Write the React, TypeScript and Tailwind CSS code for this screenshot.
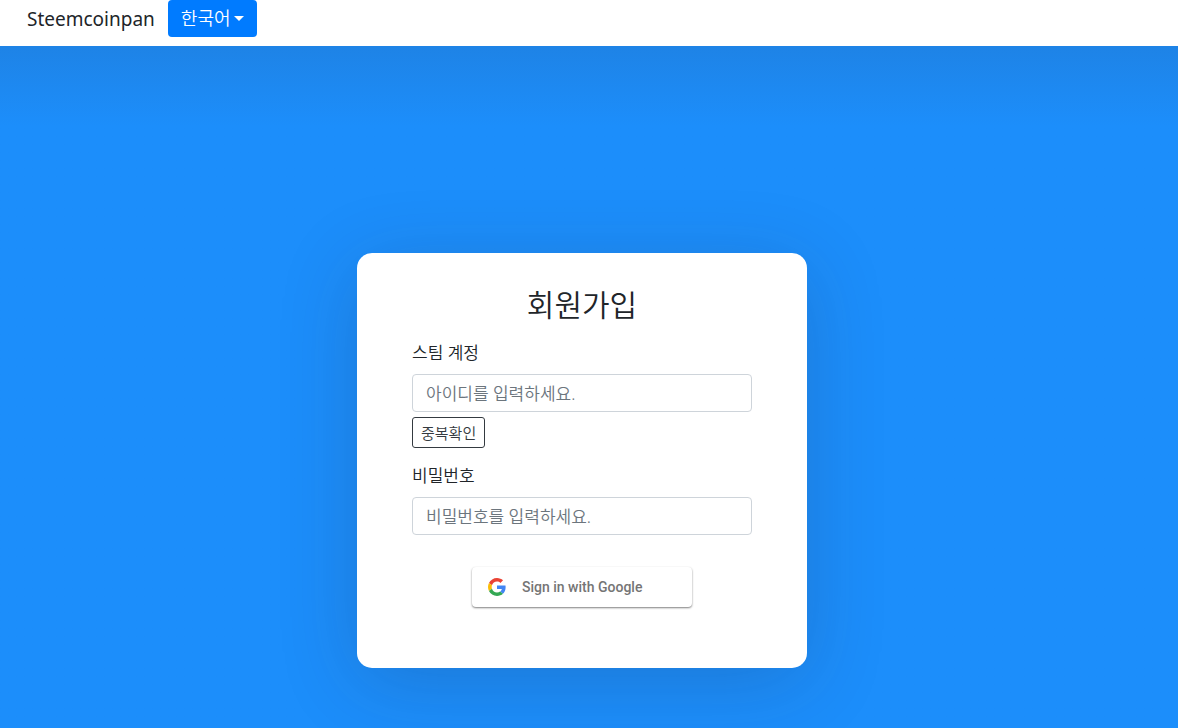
import { useState } from "react"

const GoogleLogo = () => (
  <svg viewBox="0 0 48 48" className="h-[18px] w-[18px]" aria-hidden="true">
    <path
      fill="#EA4335"
      d="M24 9.5c3.54 0 6.71 1.22 9.21 3.6l6.85-6.85C35.9 2.38 30.47 0 24 0 14.62 0 6.51 5.38 2.56 13.22l7.98 6.19C12.43 13.72 17.74 9.5 24 9.5z"
    />
    <path
      fill="#4285F4"
      d="M46.98 24.55c0-1.57-.15-3.09-.38-4.55H24v9.02h12.94c-.58 2.96-2.26 5.48-4.78 7.18l7.73 6c4.51-4.18 7.09-10.36 7.09-17.65z"
    />
    <path
      fill="#FBBC05"
      d="M10.53 28.59c-.48-1.45-.76-2.99-.76-4.59s.27-3.14.76-4.59l-7.98-6.19C.92 16.46 0 20.12 0 24c0 3.88.92 7.54 2.56 10.78l7.97-6.19z"
    />
    <path
      fill="#34A853"
      d="M24 48c6.48 0 11.93-2.13 15.89-5.81l-7.73-6c-2.15 1.45-4.92 2.3-8.16 2.3-6.26 0-11.57-4.22-13.47-9.91l-7.98 6.19C6.51 42.62 14.62 48 24 48z"
    />
  </svg>
)

const Header = () => (
  <header className="flex h-[46px] items-start bg-white pl-[27px]">
    <a href="#" className="mr-[13px] text-[19px] leading-[38px] text-[#212529]">
      Steemcoinpan
    </a>
    <button
      type="button"
      aria-haspopup="menu"
      className="flex h-[37px] items-center rounded bg-[#007bff] px-[13px] text-[18px] font-[350] text-white"
    >
      한국어
      <span className="ml-[3px] border-x-[5px] border-t-[5px] border-x-transparent border-t-white" />
    </button>
  </header>
)

interface FieldProps {
  id: string
  label: string
  type: string
  placeholder: string
  value: string
  onChange: (value: string) => void
}

const Field = ({ id, label, type, placeholder, value, onChange }: FieldProps) => (
  <div>
    <label htmlFor={id} className="mb-[9px] block text-[17px] leading-6">
      {label}
    </label>
    <input
      id={id}
      type={type}
      placeholder={placeholder}
      value={value}
      onChange={(e) => onChange(e.target.value)}
      className="block h-[38px] w-full rounded border border-[#ced4da] bg-white px-[13px] text-[17px] placeholder:text-[#6c757d]"
    />
  </div>
)

export default function App() {
  const [account, setAccount] = useState("")
  const [password, setPassword] = useState("")

  return (
    <div className="flex min-h-screen flex-col bg-[#1c8efb] font-['Noto_Sans','Noto_Sans_CJK_KR',sans-serif] text-[#212529]">
      <Header />

      <main className="flex grow justify-center bg-linear-to-b from-[#1e83e6] to-[#1c8efb] to-[80px] pt-[207px] pr-[14px] pb-[60px]">
        <form
          onSubmit={(e) => e.preventDefault()}
          className="w-[450px] rounded-[15px] bg-white px-[55px] pt-[34px] pb-[61px] font-[350] shadow-[0_14px_80px_rgba(34,35,58,0.2)]"
        >
          <h1 className="mb-[18px] text-center text-[30px] leading-9">회원가입</h1>

          <Field
            id="account"
            label="스팀 계정"
            type="text"
            placeholder="아이디를 입력하세요."
            value={account}
            onChange={setAccount}
          />
          <button
            type="button"
            className="mt-[5px] mb-4 block h-[31px] rounded-[3px] border border-[#343a40] px-2 text-[15px] leading-5 text-[#343a40]"
          >
            중복확인
          </button>

          <Field
            id="password"
            label="비밀번호"
            type="password"
            placeholder="비밀번호를 입력하세요."
            value={password}
            onChange={setPassword}
          />

          {/* Social login */}
          <button
            type="button"
            className="mx-auto mt-8 flex h-10 w-[220px] items-center gap-4 rounded-sm bg-white pl-4 font-['Roboto',sans-serif] text-sm font-medium text-[#757575] shadow-[0_1px_2px_rgba(0,0,0,0.5)]"
          >
            <GoogleLogo />
            Sign in with Google
          </button>
        </form>
      </main>
    </div>
  )
}
